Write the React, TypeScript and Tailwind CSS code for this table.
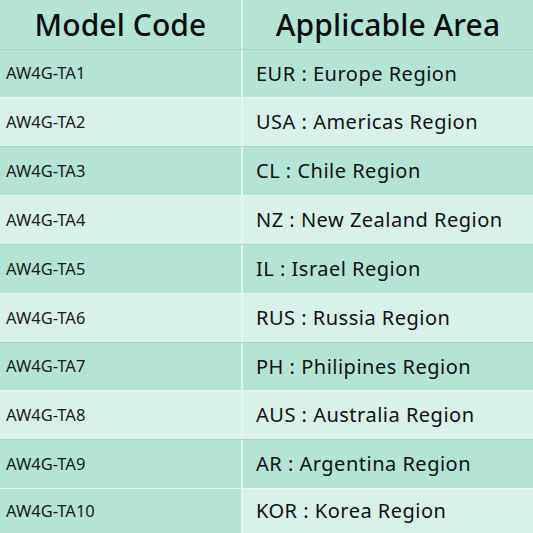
const ROWS: [string, string][] = [
  ["AW4G-TA1", "EUR : Europe Region"],
  ["AW4G-TA2", "USA : Americas Region"],
  ["AW4G-TA3", "CL : Chile Region"],
  ["AW4G-TA4", "NZ : New Zealand Region"],
  ["AW4G-TA5", "IL : Israel Region"],
  ["AW4G-TA6", "RUS : Russia Region"],
  ["AW4G-TA7", "PH : Philipines Region"],
  ["AW4G-TA8", "AUS : Australia Region"],
  ["AW4G-TA9", "AR : Argentina Region"],
  ["AW4G-TA10", "KOR : Korea Region"],
];

const HEIGHTS = [48, 49, 49, 49, 49, 49, 48, 49, 49, 45];

export default function App() {
  return (
    <div
      className="w-[533px] h-[533px] overflow-hidden bg-[#b3e4d6] text-[#111]"
      style={{ fontFamily: '"Noto Sans", "Open Sans", sans-serif' }}
    >
      <div className="flex h-[49px]">
        <div className="w-[241px] flex items-center justify-center text-[30px] font-medium tracking-[0.1px] text-[#0d0d0d]">
          Model Code
        </div>
        <div className="w-[2px] bg-[#dcf3ec]" />
        <div className="flex-1 flex items-center justify-center text-[30px] font-medium tracking-[0.1px] text-[#0d0d0d]">
          Applicable Area
        </div>
      </div>
      {ROWS.map(([code, area], i) => {
        const light = i % 2 === 1;
        const last = i === ROWS.length - 1;
        return (
          <div
            key={code}
            className={`flex border-t ${light ? "border-[#e4f7f1]" : "border-[#a6d8ca]"}`}
            style={{ height: HEIGHTS[i] }}
          >
            <div
              className={`w-[241px] flex items-center pl-[6px] text-[16.5px] text-[#1a1a1a] ${light && !last ? "bg-[#d8f2eb]" : "bg-[#b3e4d6]"}`}
            >
              {code}
            </div>
            <div className="w-[2px] bg-[#e2f6f0]" />
            <div
              className={`flex-1 flex items-center pl-[13px] text-[20px] tracking-[0.5px] text-[#111] ${light ? "bg-[#d8f2eb]" : "bg-[#b3e4d6]"}`}
            >
              {area}
            </div>
          </div>
        );
      })}
    </div>
  );
}
